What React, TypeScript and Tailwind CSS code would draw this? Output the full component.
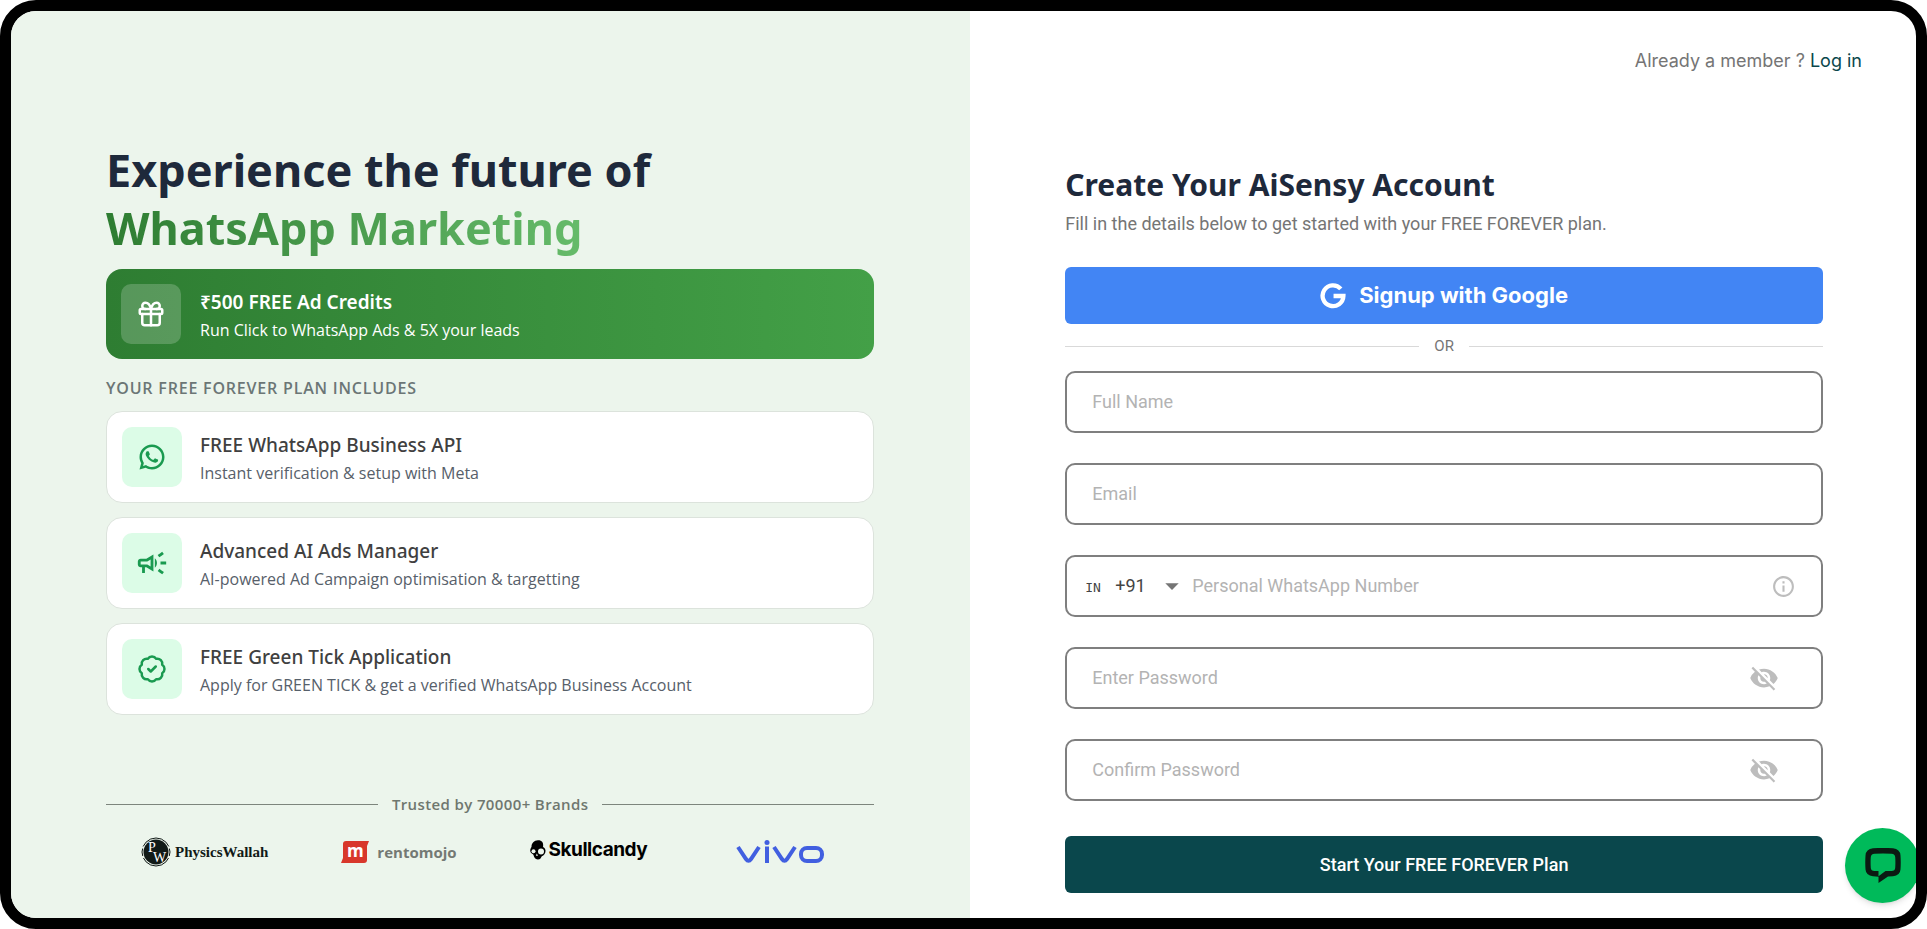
import { useState } from "react";
import { MdArrowDropDown, MdInfoOutline, MdOutlineCampaign, MdVisibility, MdVisibilityOff } from "react-icons/md";
import { RiWhatsappLine } from "react-icons/ri";
import { LuBadgeCheck, LuGift } from "react-icons/lu";

const features = [
  {
    icon: <RiWhatsappLine className="size-[30px]" />,
    title: "FREE WhatsApp Business API",
    text: "Instant verification & setup with Meta",
  },
  {
    icon: <MdOutlineCampaign className="size-[34px]" />,
    title: "Advanced AI Ads Manager",
    text: "AI-powered Ad Campaign optimisation & targetting",
  },
  {
    icon: <LuBadgeCheck className="size-[30px]" />,
    title: "FREE Green Tick Application",
    text: "Apply for GREEN TICK & get a verified WhatsApp Business Account",
  },
];

const fieldBox =
  "flex h-[62px] items-center rounded-[10px] border-2 border-[#7f7f7f] bg-white focus-within:border-[#0a474c]";
const fieldInput =
  "h-full min-w-0 flex-1 bg-transparent pb-[2px] text-lg text-gray-800 placeholder:text-[#b3b3b3] focus:outline-none";

function TextField({ id, label, type = "text" }: { id: string; label: string; type?: string }) {
  return (
    <div className={`${fieldBox} px-[25px]`}>
      <input id={id} type={type} placeholder={label} aria-label={label} className={fieldInput} />
    </div>
  );
}

function PasswordField({ id, label }: { id: string; label: string }) {
  const [visible, setVisible] = useState(false);

  return (
    <div className={`${fieldBox} pl-[25px] pr-[42px]`}>
      <input
        id={id}
        type={visible ? "text" : "password"}
        placeholder={label}
        aria-label={label}
        className={fieldInput}
      />
      <button
        type="button"
        aria-label={visible ? "Hide password" : "Show password"}
        onClick={() => setVisible(!visible)}
        className="text-[#bdbdbd]"
      >
        {visible ? <MdVisibility className="size-[30px]" /> : <MdVisibilityOff className="size-[30px]" />}
      </button>
    </div>
  );
}

function PhoneField() {
  return (
    <div className={`${fieldBox} pl-[18px] pr-[25px]`}>
      <div className="relative flex h-full items-center text-[#444]">
        <select
          aria-label="Country code"
          className="h-full w-[107px] appearance-none bg-transparent pl-[30px] text-lg focus:outline-none"
        >
          <option>+91</option>
          <option>+1</option>
          <option>+44</option>
        </select>
        <span className="pointer-events-none absolute left-0 pt-1 font-['DejaVu_Sans_Mono',monospace] text-[13px]">
          IN
        </span>
        <MdArrowDropDown className="pointer-events-none absolute right-1 size-8 text-[#757575]" />
      </div>
      <input
        id="phone"
        type="tel"
        placeholder="Personal WhatsApp Number"
        aria-label="Personal WhatsApp Number"
        className={fieldInput}
      />
      <MdInfoOutline className="size-[25px] text-[#bdbdbd]" />
    </div>
  );
}

function PhysicsWallahLogo() {
  return (
    <div className="flex items-center gap-1 text-[#111a17]">
      <svg viewBox="0 0 30 30" className="size-[30px] overflow-visible">
        <circle cx="15" cy="15" r="14" fill="none" stroke="currentColor" strokeWidth="1" />
        <circle cx="15" cy="15" r="12.5" fill="currentColor" />
        <path d="M0 10.5h3M27 10.5h3M0 20h3M27 20h3" stroke="#ecf5ec" strokeWidth="2" />
        <text x="7" y="15" fontSize="14" fill="#fff" fontFamily="Liberation Serif, serif">
          P
        </text>
        <text x="12" y="25" fontSize="14" fill="#fff" fontFamily="Liberation Serif, serif">
          W
        </text>
      </svg>
      <span className="font-['Liberation_Serif',serif] text-[15px] font-bold leading-5">PhysicsWallah</span>
    </div>
  );
}

function RentomojoLogo() {
  return (
    <div className="flex items-center gap-2">
      <svg viewBox="0 0 28 22" className="h-[22px] w-7 overflow-visible">
        <path d="M4 0h24l-2 5v14q0 3-3 3H0l2-5V3q0-3 3-3z" fill="#d8372b" />
        <text x="6" y="16" fontSize="17" fontWeight="700" fill="#fff" fontFamily="Open Sans, sans-serif">
          m
        </text>
      </svg>
      <span className="font-['Open_Sans',sans-serif] text-[15px] font-bold leading-5 text-[#747974]">rentomojo</span>
    </div>
  );
}

function SkullcandyLogo() {
  return (
    <div className="flex items-center gap-[3px] pb-1 text-black">
      <svg viewBox="0 0 16 20" className="h-5 w-4">
        <path
          d="M8 .3C4 .5 1.500 3 1.500 7 .3 8.500-.3 11 .8 12.600c.8 1.100 2.200 1.200 2.700 2.400.5 2 1.500 4.300 4.300 4.600 2.700 0 3.200-2 4-3.400 2.200-1 3.900-3 3.700-5.700-.2-1.800-1.300-3-2.500-3.500C13.500 4 13 .2 8 .3z"
          fill="currentColor"
        />
        <circle cx="3.500" cy="11.200" r="2" fill="#ecf5ec" />
        <circle cx="11" cy="11.500" r="3" fill="#ecf5ec" />
        <path d="M6.800 13.500l1.200 2.300H5.900z" fill="#ecf5ec" />
      </svg>
      <span className="font-['Inter',sans-serif] text-[19px] font-bold leading-6 tracking-tight">Skullcandy</span>
    </div>
  );
}

function VivoLogo() {
  return (
    <svg
      viewBox="0 0 88 24"
      className="ml-4 h-6 w-[88px]"
      fill="none"
      stroke="#415fe0"
      strokeWidth="4"
      role="img"
      aria-label="vivo"
    >
      <path d="M2 7l8 12q2.500 3.500 5 0l8-12" />
      <path d="M31 6.500V23" />
      <path d="M38 7l8 12q2.500 3.500 5 0l8-12" />
      <rect x="65" y="8" width="21" height="13" rx="6" />
      <circle cx="31" cy="2.500" r="2.500" fill="#415fe0" stroke="none" />
    </svg>
  );
}

function Showcase() {
  return (
    <section className="flex flex-col justify-end bg-[#ecf5ec] pb-[51px] pl-[95px] pr-24 font-['Open_Sans',sans-serif]">
      <h1 className="font-['Noto_Sans',sans-serif] text-[45px] font-bold leading-[58px] text-[#1e293b]">
        Experience the future of
        <br />
        <span className="bg-linear-to-r from-[#2e7d32] to-[#66bb6a] bg-clip-text text-transparent">
          WhatsApp Marketing
        </span>
      </h1>

      <div className="mt-3 flex items-center gap-[19px] rounded-2xl bg-linear-to-r from-[#2e7d32] to-[#43a047] p-[15px] text-white">
        <div className="grid size-[60px] shrink-0 place-items-center rounded-[10px] bg-white/20">
          <LuGift className="size-[30px]" />
        </div>
        <div className="pt-1">
          <h2 className="font-['Noto_Sans',sans-serif] text-[19px] font-semibold leading-7">₹500 FREE Ad Credits</h2>
          <p className="text-base leading-7">Run Click to WhatsApp Ads &amp; 5X your leads</p>
        </div>
      </div>

      <p className="mt-[17px] text-base font-semibold uppercase leading-6 tracking-wider text-[#6b7676]">
        Your free forever plan includes
      </p>

      <ul className="mt-[11px] flex flex-col gap-[14px]">
        {features.map(({ icon, title, text }) => (
          <li
            key={title}
            className="flex items-center gap-[18px] rounded-2xl border border-[#dce3dc] bg-white p-[15px]"
          >
            <div className="grid size-[60px] shrink-0 place-items-center rounded-[10px] bg-[#dcfce7] text-[#1a9a50]">
              {icon}
            </div>
            <div className="pt-1">
              <h3 className="font-['Noto_Sans',sans-serif] text-[19px] font-medium leading-7 text-[#404040]">
                {title}
              </h3>
              <p className="text-base leading-7 text-[#57606a]">{text}</p>
            </div>
          </li>
        ))}
      </ul>

      <div className="mt-[77px] flex items-center gap-[14px]">
        <span className="h-px flex-1 bg-[#7d857d]" />
        <span className="text-[15px] font-semibold leading-6 tracking-wide text-[#6f776f]">
          Trusted by 70000+ Brands
        </span>
        <span className="h-px flex-1 bg-[#7d857d]" />
      </div>

      <div className="mt-[21px] flex items-center justify-between pl-[35px] pr-[50px]">
        <PhysicsWallahLogo />
        <RentomojoLogo />
        <SkullcandyLogo />
        <VivoLogo />
      </div>
    </section>
  );
}

function SignupForm() {
  return (
    <section className="flex flex-col pb-[25px] font-['Roboto',sans-serif]">
      <p className="mt-9 self-end pr-[54px] font-['Inter',sans-serif] text-lg text-[#757575]">
        Already a member ?{" "}
        <a href="#login" className="text-[#0a474c]">
          Log in
        </a>
      </p>

      <form className="mt-auto flex flex-col pl-[95px] pr-[93px]" onSubmit={(e) => e.preventDefault()}>
        <h2 className="font-['Noto_Sans',sans-serif] text-3xl font-bold leading-10 text-[#1e293b]">
          Create Your AiSensy Account
        </h2>
        <p className="mt-[7px] text-lg leading-6 text-[#757575]">
          Fill in the details below to get started with your FREE FOREVER plan.
        </p>

        <button
          type="button"
          className="mt-[31px] flex h-[57px] items-center justify-center gap-[13px] rounded-md bg-[#4285f4] font-['Inter',sans-serif] text-[22px] font-bold text-white"
        >
          <svg viewBox="0 0 24 24" className="size-[26px]" fill="none" stroke="currentColor" strokeWidth="4">
            <path d="M19.200 5.400A9.600 9.600 0 1 0 21.600 12H12.500" />
          </svg>
          Signup with Google
        </button>

        <div className="mb-[13px] mt-[11px] flex items-center gap-[15px] text-[#757575]">
          <span className="h-px flex-1 bg-[#d9d9d9]" />
          <span className="text-[15px] leading-[23px]">OR</span>
          <span className="h-px flex-1 bg-[#d9d9d9]" />
        </div>

        <div className="flex flex-col gap-[30px]">
          <TextField id="name" label="Full Name" />
          <TextField id="email" label="Email" type="email" />
          <PhoneField />
          <PasswordField id="password" label="Enter Password" />
          <PasswordField id="confirm" label="Confirm Password" />
        </div>

        <button type="submit" className="mt-[35px] h-[57px] rounded-md bg-[#0a474c] text-lg font-medium text-white">
          Start Your FREE FOREVER Plan
        </button>
      </form>
    </section>
  );
}

export default function App() {
  return (
    <main className="relative grid min-h-screen grid-cols-[71fr_70fr] overflow-hidden rounded-[36px] border-[11px] border-black bg-white">
      <Showcase />
      <SignupForm />
      <button
        type="button"
        aria-label="Open chat"
        className="absolute -right-1 bottom-[15px] grid size-[75px] place-items-center rounded-full bg-[#00ba5a] text-[#0b1a12] shadow-md"
      >
        <svg viewBox="0 0 36 36" className="size-9" fill="currentColor">
          <path
            fillRule="evenodd"
            d="M8 .3Q18-.5 28 .3 35 1 35.500 7.500q.5 7 0 14Q35 27.500 28 28.300l-5 .3L13.500 35v-6.300L8 28.300Q1 27.500.5 21.500q-.5-7 0-14Q1 1 8 .3zM9.500 5.800Q6 6 5.800 9q-.4 5.500 0 11Q6 22.800 9.500 23h4v5.300L20.500 23h6q3.500-.2 3.700-3 .4-5.500 0-11-.2-3-3.700-3.200-8.500-.4-17 0z"
          />
        </svg>
      </button>
    </main>
  );
}
